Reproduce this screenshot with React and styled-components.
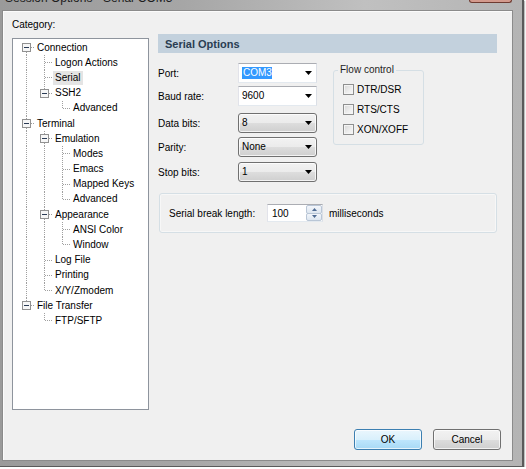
import React from "react";
import styled, { createGlobalStyle } from "styled-components";

const tree = [
  {
    label: "Connection",
    children: [
      { label: "Logon Actions" },
      { label: "Serial", selected: true },
      { label: "SSH2", children: [{ label: "Advanced" }] },
    ],
  },
  {
    label: "Terminal",
    children: [
      {
        label: "Emulation",
        children: [
          { label: "Modes" },
          { label: "Emacs" },
          { label: "Mapped Keys" },
          { label: "Advanced" },
        ],
      },
      { label: "Appearance", children: [{ label: "ANSI Color" }, { label: "Window" }] },
      { label: "Log File" },
      { label: "Printing" },
      { label: "X/Y/Zmodem" },
    ],
  },
  { label: "File Transfer", children: [{ label: "FTP/SFTP" }] },
];

// turn the nested tree into rows, remembering which guide lines continue
function flatten(nodes, guides = [], out = [], root = true) {
  nodes.forEach((n, i) => {
    const last = i === nodes.length - 1;
    out.push({ ...n, guides, last, noTop: root && i === 0 });
    if (n.children) flatten(n.children, [...guides, !last], out, false);
  });
  return out;
}

const rows = flatten(tree);
const ROW_H = 15.2;

const fields = [
  { label: "Port:", value: "COM3", editable: true, selected: true, mt: 0 },
  { label: "Baud rate:", value: "9600", editable: true, mt: 3 },
  { label: "Data bits:", value: "8", mt: 7 },
  { label: "Parity:", value: "None", mt: 4 },
  { label: "Stop bits:", value: "1", mt: 5 },
];

const flowOptions = ["DTR/DSR", "RTS/CTS", "XON/XOFF"];

function Guide({ on }) {
  return (
    <svg width="18" height={ROW_H} style={{ display: "block", flex: "none" }}>
      {on && (
        <line x1="9.5" y1="0" x2="9.5" y2={ROW_H} stroke="#a0a0a0" strokeDasharray="1 1" shapeRendering="crispEdges" />
      )}
    </svg>
  );
}

function Connector({ top, bottom, box }) {
  const lineProps = { stroke: "#a0a0a0", strokeDasharray: "1 1", shapeRendering: "crispEdges" };
  return (
    <svg width="18" height={ROW_H} style={{ display: "block", flex: "none" }}>
      {top && <line x1="9.5" y1="0" x2="9.5" y2={box ? 3 : 7.5} {...lineProps} />}
      {bottom && <line x1="9.5" y1={box ? 12 : 7.5} x2="9.5" y2={ROW_H} {...lineProps} />}
      <line x1={box ? 14 : 10} y1="7.5" x2="18" y2="7.5" {...lineProps} />
      {box && (
        <g shapeRendering="crispEdges">
          <rect x="5.5" y="3.5" width="8" height="8" fill="#f6f6f6" stroke="#919191" />
          <line x1="7" y1="7.5" x2="12" y2="7.5" stroke="#2a3b55" />
        </g>
      )}
    </svg>
  );
}

function Arrow() {
  return (
    <svg width="7" height="4" viewBox="0 0 7 4" style={{ display: "block" }}>
      <path d="M0 0 L7 0 L3.5 4 Z" fill="#000" />
    </svg>
  );
}

function SpinArrow({ up }) {
  return (
    <svg width="5" height="3" viewBox="0 0 5 3" style={{ display: "block" }}>
      <path d={up ? "M0 3 L5 3 L2.5 0 Z" : "M0 0 L5 0 L2.5 3 Z"} fill="#4f6b93" />
    </svg>
  );
}

export default function App() {
  return (
    <>
      <GlobalStyle />
      <Window>
        <TitleBar>
          <Title>Session Options - Serial-COM3</Title>
          <CloseButton />
        </TitleBar>
        <Client>
          <Main>
            <LeftCol>
              <CategoryLabel>Category:</CategoryLabel>
              <Tree>
                {rows.map((row, i) => (
                  <TreeRow key={i}>
                    {row.guides.map((g, j) => (
                      <Guide key={j} on={g} />
                    ))}
                    <Connector top={!row.noTop} bottom={!row.last} box={!!row.children} />
                    <NodeLabel $selected={row.selected}>{row.label}</NodeLabel>
                  </TreeRow>
                ))}
              </Tree>
            </LeftCol>

            <RightCol>
              <Header>Serial Options</Header>
              <FormArea>
                <FormColumn>
                  {fields.map((f) => (
                    <FormRow key={f.label} $mt={f.mt}>
                      <FieldLabel>{f.label}</FieldLabel>
                      <Combo $editable={f.editable}>
                        <ComboValue $selected={f.selected}>{f.value}</ComboValue>
                        <Arrow />
                      </Combo>
                    </FormRow>
                  ))}
                </FormColumn>
                <GroupBox>
                  <Legend>Flow control</Legend>
                  <CheckList>
                    {flowOptions.map((o) => (
                      <CheckRow key={o}>
                        <CheckBox />
                        <CheckLabel>{o}</CheckLabel>
                      </CheckRow>
                    ))}
                  </CheckList>
                </GroupBox>
              </FormArea>

              <BreakGroup>
                <BreakLabel>Serial break length:</BreakLabel>
                <SpinBox>
                  <SpinValue>100</SpinValue>
                  <SpinButtons>
                    <SpinButton>
                      <SpinArrow up />
                    </SpinButton>
                    <SpinButton>
                      <SpinArrow />
                    </SpinButton>
                  </SpinButtons>
                </SpinBox>
                <Unit>milliseconds</Unit>
              </BreakGroup>
            </RightCol>
          </Main>

          <ButtonRow>
            <DialogButton $default>OK</DialogButton>
            <DialogButton>Cancel</DialogButton>
          </ButtonRow>
        </Client>
      </Window>
    </>
  );
}

const GlobalStyle = createGlobalStyle`
  html, body {
    margin: 0;
    padding: 0;
    background: #fff;
  }
  body {
    font-family: "Liberation Sans", Arial, sans-serif;
    font-size: 10px;
    color: #000;
  }
`;

const Window = styled.div`
  width: 524px;
  height: 467px;
  box-sizing: border-box;
  padding: 0 9px 5px 2px;
  display: flex;
  flex-direction: column;
  background: linear-gradient(90deg, #9a9a9a 0%, #a6a6a6 35%, #c0c0c0 70%, #b4b4b4 100%);
  border-right: 2px solid #5a5a5a;
  border-bottom: 1px solid #5a5a5a;
  box-shadow: 1px 1px 1px rgba(0, 0, 0, 0.25);
`;

const TitleBar = styled.div`
  height: 10px;
  overflow: hidden;
  display: flex;
  align-items: flex-start;
`;

const Title = styled.div`
  margin: -8px 0 0 3px;
  font-size: 12px;
  line-height: 12px;
  color: #1d1d1d;
  white-space: nowrap;
`;

const CloseButton = styled.div`
  margin-left: auto;
  margin-right: 1px;
  width: 41px;
  height: 2px;
  background: #d39a8d;
  border: 1px solid #6e3b31;
  border-top: none;
  border-radius: 0 0 4px 4px;
`;

const Client = styled.div`
  flex: 1;
  display: flex;
  flex-direction: column;
  background: #f0f0f0;
  border: 1px solid #8b8b8b;
  box-shadow: inset 1px 1px 0 #fbfbfb;
`;

const Main = styled.div`
  display: flex;
  padding-left: 9px;
`;

const LeftCol = styled.div`
  width: 137px;
  flex: none;
`;

const CategoryLabel = styled.div`
  padding-top: 8px;
  line-height: 12px;
  margin-bottom: 7px;
`;

const Tree = styled.div`
  height: 372px;
  box-sizing: border-box;
  background: #fff;
  border: 1px solid #8e949d;
  padding: 1px 0 0 4px;
  overflow: hidden;
`;

const TreeRow = styled.div`
  display: flex;
  align-items: center;
  height: ${ROW_H}px;
`;

const NodeLabel = styled.span`
  padding: 0 2px;
  line-height: 14px;
  white-space: nowrap;
  background: ${(p) => (p.$selected ? "#e4e4e4" : "transparent")};
`;

const RightCol = styled.div`
  width: 339px;
  margin: 23px 0 0 9px;
`;

const Header = styled.div`
  height: 19px;
  display: flex;
  align-items: center;
  padding-left: 7px;
  background: #c3d1dd;
  color: #2a3d52;
  font-size: 11px;
  font-weight: bold;
`;

const FormArea = styled.div`
  display: flex;
  align-items: flex-start;
  margin-top: 10px;
`;

const FormColumn = styled.div`
  width: 159px;
`;

const FormRow = styled.div`
  display: flex;
  align-items: center;
  height: 20px;
  margin-top: ${(p) => p.$mt}px;
`;

const FieldLabel = styled.div`
  width: 80px;
`;

const Combo = styled.div`
  width: 79px;
  height: 20px;
  box-sizing: border-box;
  display: flex;
  align-items: center;
  justify-content: space-between;
  padding: 0 4px 0 3px;
  ${(p) =>
    p.$editable
      ? `
    background: #fff;
    border: 1px solid;
    border-color: #abadb3 #dbdfe6 #e3e9ef #e2e3ea;
  `
      : `
    border: 1px solid #707070;
    border-radius: 3px;
    background: linear-gradient(#f2f2f2 0%, #ebebeb 50%, #dddddd 51%, #cfcfcf 100%);
    box-shadow: inset 0 0 0 1px rgba(255, 255, 255, 0.75);
  `}
`;

const ComboValue = styled.span`
  line-height: 12px;
  padding-left: ${(p) => (p.$selected ? "1px" : "0")};
  background: ${(p) => (p.$selected ? "#3399ff" : "transparent")};
  color: ${(p) => (p.$selected ? "#fff" : "#000")};
`;

const GroupBox = styled.fieldset`
  width: 91px;
  box-sizing: border-box;
  margin: 1px 0 0 16px;
  padding: 0 0 5px 0;
  border: 1px solid #d5dfe5;
  border-radius: 3px;
  min-width: 0;
`;

const Legend = styled.legend`
  margin-left: 4px;
  padding: 0 2px;
  line-height: 12px;
  color: #1e1e1e;
`;

const CheckList = styled.div`
  padding: 3px 0 0 9px;
`;

const CheckRow = styled.div`
  display: flex;
  align-items: center;
  height: 20px;
`;

const CheckBox = styled.span`
  width: 11px;
  height: 11px;
  box-sizing: border-box;
  border: 1px solid #8e8f8f;
  background: linear-gradient(135deg, #d6d6d6 0%, #eeeeee 60%, #f8f8f8 100%);
  box-shadow: inset 0 0 0 1px #f4f4f4;
`;

const CheckLabel = styled.span`
  margin-left: 3px;
`;

const BreakGroup = styled.div`
  margin: 11px 0 0 1px;
  width: 338px;
  height: 40px;
  box-sizing: border-box;
  display: flex;
  align-items: center;
  padding-left: 9px;
  border: 1px solid #d5dfe5;
  border-radius: 3px;
  box-shadow: inset 0 0 0 1px #f7f7f7;
`;

const BreakLabel = styled.div`
  width: 98px;
`;

const SpinBox = styled.div`
  width: 56px;
  height: 18px;
  box-sizing: border-box;
  display: flex;
  align-items: stretch;
  background: #fff;
  border: 1px solid;
  border-color: #abadb3 #dbdfe6 #e3e9ef #e2e3ea;
`;

const SpinValue = styled.div`
  flex: 1;
  display: flex;
  align-items: center;
  padding-left: 4px;
`;

const SpinButtons = styled.div`
  width: 16px;
  display: flex;
  flex-direction: column;
`;

const SpinButton = styled.div`
  flex: 1;
  display: flex;
  align-items: center;
  justify-content: center;
  border: 1px solid #b9c6d6;
  border-radius: 2px;
  background: linear-gradient(#f3f6fb, #dde6f0);
  & + & {
    margin-top: -1px;
  }
`;

const Unit = styled.div`
  margin-left: 6px;
`;

const ButtonRow = styled.div`
  margin-top: auto;
  display: flex;
  justify-content: flex-end;
  gap: 11px;
  padding: 0 11px 10px 0;
`;

const DialogButton = styled.div`
  width: 68px;
  height: 21px;
  box-sizing: border-box;
  display: flex;
  align-items: center;
  justify-content: center;
  border-radius: 3px;
  border: 1px solid ${(p) => (p.$default ? "#3c7fb1" : "#707070")};
  background: ${(p) =>
    p.$default
      ? "linear-gradient(#eaf6fd 0%, #d9f0fc 50%, #bee6fd 51%, #a7d9f5 100%)"
      : "linear-gradient(#f2f2f2 0%, #ebebeb 50%, #dddddd 51%, #cfcfcf 100%)"};
  box-shadow: inset 0 0 0 1px rgba(255, 255, 255, 0.7);
`;
